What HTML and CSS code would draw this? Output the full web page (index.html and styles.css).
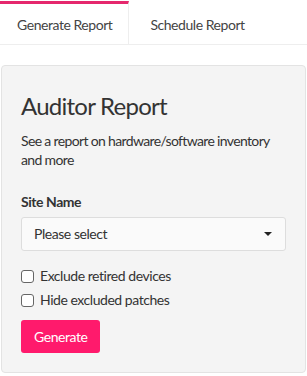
FILE: index.html
```html
<!DOCTYPE html>
<html lang="en">
<head>
    <meta charset="UTF-8">
    <meta name="viewport" content="width=device-width, initial-scale=1.0">
    <title>Auditor Report</title>
    <link rel="stylesheet" href="styles.css">
</head>
<body>
    <ul class="tabs">
        <li class="tab active">Generate Report</li>
        <li class="tab">Schedule Report</li>
    </ul>

    <div class="well">
        <h3>Auditor Report</h3>
        <p class="lead">See a report on hardware/software inventory and more</p>

        <div class="form-group">
            <label class="field-label">Site Name</label>
            <div class="select">
                <span>Please select</span>
                <span class="caret"></span>
            </div>
        </div>

        <label class="check"><span class="box"></span>Exclude retired devices</label>
        <label class="check"><span class="box"></span>Hide excluded patches</label>

        <button class="btn">Generate</button>
    </div>
</body>
</html>
```

FILE: styles.css
```css
body {
    margin: 0;
    background-color: #FFFFFF;
    color: #333333;
    font-family: Lato, "Liberation Sans", sans-serif;
    font-size: 14px;
    line-height: 20px;
    letter-spacing: -0.45px;
}

.tabs {
    list-style: none;
    margin: 0;
    padding: 0;
    display: flex;
    border-bottom: 1px solid #EEEEEE;
}

.tab {
    margin-top: 1px;
    padding: 11px 16px 9px 17px;
    margin-right: 4px;
    color: #444444;
    border-top: 3px solid transparent;
}

.tab.active {
    border-top-color: #E5286D;
    border-right: 1px solid #EEEEEE;
}

.well {
    margin: 20px 1px 0;
    padding: 19px;
    background-color: #F4F4F4;
    border: 1px solid #E3E3E3;
    border-radius: 4px;
}

h3 {
    margin: 6px 0 10px;
    font-size: 24px;
    font-weight: 400;
    line-height: 30px;
    letter-spacing: -0.75px;
    color: #333333;
}

.lead {
    margin: 0 0 23px;
    line-height: 19px;
    letter-spacing: -0.65px;
}

.form-group {
    margin-bottom: 15px;
}

.field-label {
    display: block;
    font-weight: 700;
    margin-bottom: 5px;
}

.select {
    display: flex;
    justify-content: space-between;
    align-items: center;
    height: 32px;
    padding: 0 12px;
    background-color: #FAFAFA;
    border: 1px solid #DDDDDD;
    border-radius: 3px;
}

.caret {
    width: 0;
    height: 0;
    border-left: 4px solid transparent;
    border-right: 4px solid transparent;
    border-top: 4px solid #222222;
    margin-right: 1px;
}

.check {
    display: flex;
    align-items: center;
    gap: 6px;
    margin-bottom: 4px;
}

.box {
    width: 11px;
    height: 11px;
    border: 1px solid #666666;
    border-radius: 3px;
    background-color: #FFFFFF;
}

.btn {
    margin-top: 6px;
    height: 33px;
    padding: 0 13px;
    background-color: #FF1A6C;
    color: #FFFFFF;
    border: none;
    border-radius: 3px;
    font-family: inherit;
    font-size: 14px;
    letter-spacing: -0.45px;
}
```
